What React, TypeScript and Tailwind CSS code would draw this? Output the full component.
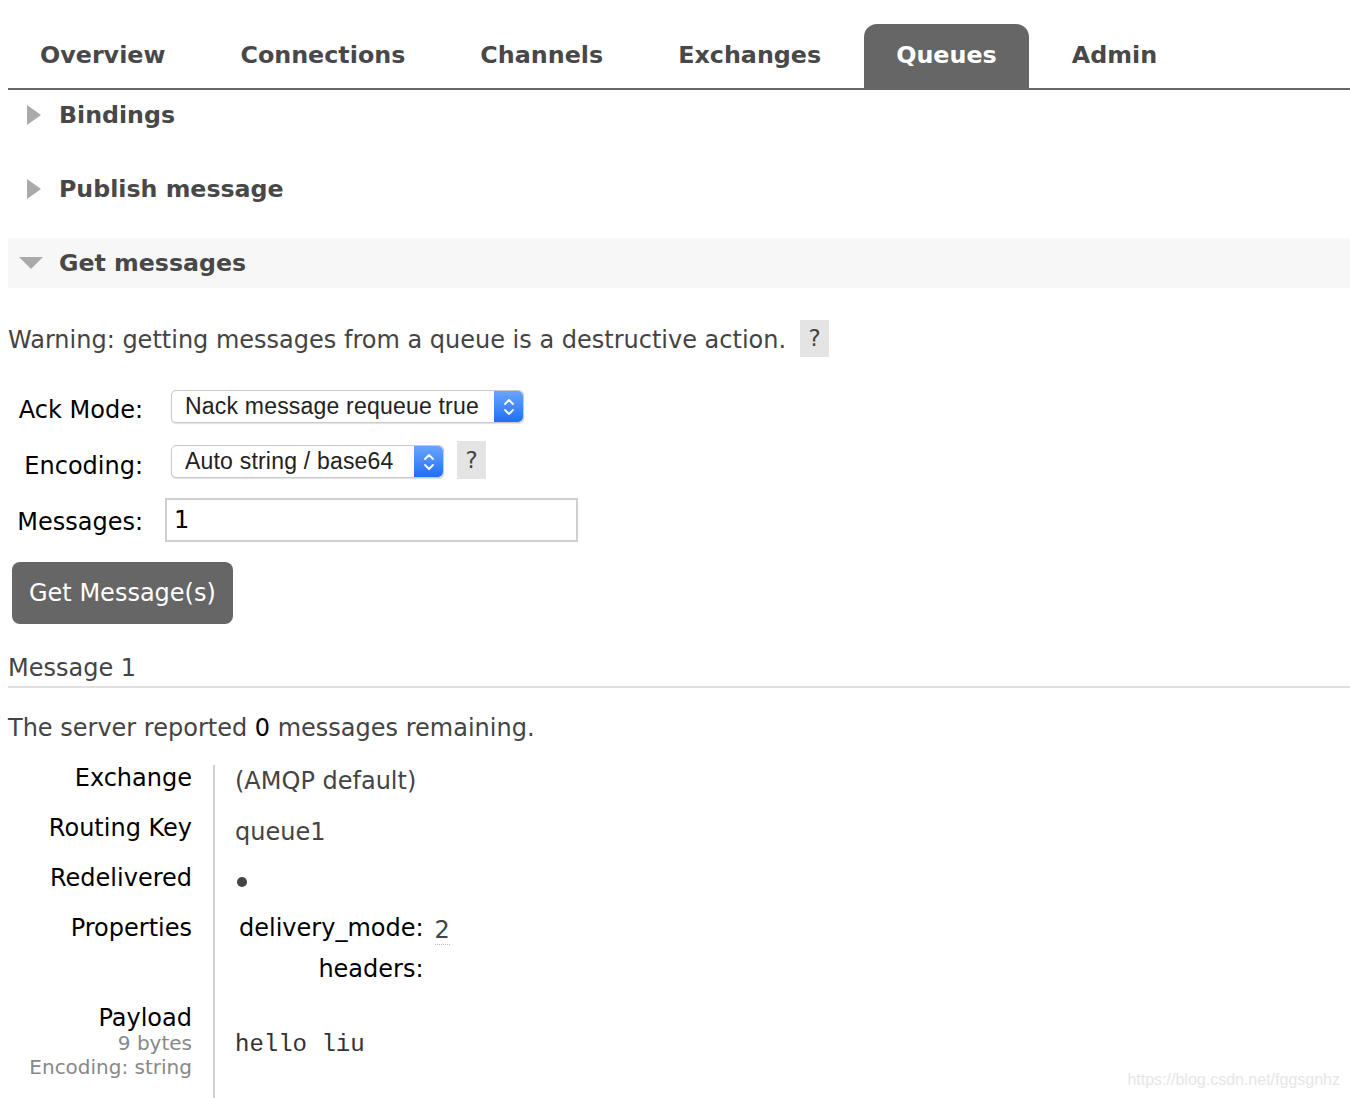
import React from "react";

const verdana = { fontFamily: '"DejaVu Sans", Verdana, sans-serif' };
const arial = { fontFamily: '"Liberation Sans", Arial, sans-serif' };
const mono = { fontFamily: '"Liberation Mono", "Courier New", monospace' };

const tabs = ["Overview", "Connections", "Channels", "Exchanges", "Queues", "Admin"];

function RightTri() {
  return (
    <svg width="14" height="20" viewBox="0 0 14 20" className="block">
      <polygon points="0,0 14,10 0,20" fill="#aaaaaa" />
    </svg>
  );
}

function DownTri() {
  return (
    <svg width="24" height="12" viewBox="0 0 24 12" className="block">
      <polygon points="0,0 24,0 12,12" fill="#aaaaaa" />
    </svg>
  );
}

function Stepper() {
  return (
    <div className="flex h-full w-[29px] items-center justify-center rounded-r-[5px] bg-gradient-to-b from-[#68a5ff] to-[#1f6ef5]">
      <svg width="12" height="22" viewBox="0 0 12 22">
        <polyline points="2,8 6,4 10,8" fill="none" stroke="#fff" strokeWidth="1.8" strokeLinecap="round" strokeLinejoin="round" />
        <polyline points="2,14 6,18 10,14" fill="none" stroke="#fff" strokeWidth="1.8" strokeLinecap="round" strokeLinejoin="round" />
      </svg>
    </div>
  );
}

function Select({ label, width }: { label: string; width: string }) {
  return (
    <div
      className={`flex h-[33px] items-stretch rounded-[5px] border border-[#c9c9c9] bg-white shadow-[0_1px_1px_rgba(0,0,0,0.12)] ${width}`}
    >
      <div
        className="flex flex-1 items-center pl-[13px] text-[23px] leading-[31px] tracking-[0.2px] text-[#222]"
        style={arial}
      >
        {label}
      </div>
      <Stepper />
    </div>
  );
}

function Help({ className = "" }: { className?: string }) {
  return (
    <div
      className={`flex h-[37px] w-[29px] shrink-0 items-center justify-center bg-[#e4e4e4] text-[23px] text-[#444] ${className}`}
      style={verdana}
    >
      ?
    </div>
  );
}

function SectionHeader({ title, open }: { title: string; open?: boolean }) {
  return (
    <div className={`flex h-[50px] items-center ${open ? "bg-[#f7f7f7]" : ""}`}>
      <div className={open ? "ml-[11px] mr-[16px]" : "ml-[19px] mr-[18px]"}>
        {open ? <DownTri /> : <RightTri />}
      </div>
      <h2 className="text-[23.7px] font-bold leading-[30px] text-[#484848]" style={verdana}>
        {title}
      </h2>
    </div>
  );
}

function DetailRow({
  label,
  children,
  height,
}: {
  label: React.ReactNode;
  children: React.ReactNode;
  height: string;
}) {
  return (
    <div className={`flex ${height}`}>
      <div className="w-[205px] shrink-0 pr-[21px] text-right text-[24px] leading-[26px] text-black" style={verdana}>
        {label}
      </div>
      <div className="flex-1 border-l-2 border-[#d0d0d0] pl-[20px]">{children}</div>
    </div>
  );
}

export default function App() {
  return (
    <div className="relative h-[1098px] overflow-hidden bg-white pl-2" style={verdana}>
      {/* top navigation */}
      <nav className="mt-[24px] flex h-[66px] items-stretch border-b-2 border-[#666]">
        {tabs.map((t) => (
          <div
            key={t}
            className={`mr-[11px] flex items-center px-[32px] text-[23.8px] font-bold ${
              t === "Queues" ? "rounded-t-[13px] bg-[#666] text-white" : "text-[#484848]"
            }`}
          >
            {t}
          </div>
        ))}
      </nav>

      {/* collapsible sections */}
      <SectionHeader title="Bindings" />
      <div className="h-[24px]" />
      <SectionHeader title="Publish message" />
      <div className="h-[24px]" />
      <SectionHeader title="Get messages" open />

      {/* get messages form */}
      <div className="mt-[32px] flex items-center">
        <p className="pt-[3px] text-[24px] leading-[34px] text-[#444]">
          Warning: getting messages from a queue is a destructive action.
        </p>
        <Help className="ml-[14px]" />
      </div>

      <div className="mt-[33px] flex items-start">
        <div className="mt-[4px] w-[135px] text-right text-[24px] leading-[33px] text-black">Ack Mode:</div>
        <div className="ml-[28px]">
          <Select label="Nack message requeue true" width="w-[353px]" />
        </div>
      </div>
      <div className="mt-[14px] flex items-start">
        <div className="mt-[9px] w-[135px] text-right text-[24px] leading-[33px] text-black">Encoding:</div>
        <div className="ml-[28px] mt-[4px]">
          <Select label="Auto string / base64" width="w-[273px]" />
        </div>
        <Help className="ml-[13px] h-[38px]" />
      </div>
      <div className="mt-[15px] flex items-start">
        <div className="mt-[8px] w-[135px] text-right text-[24px] leading-[33px] text-black">Messages:</div>
        <div className="ml-[22px] flex h-[44px] w-[413px] items-center border-2 border-[#cfcfcf] px-[7px] text-[24px] leading-[30px] text-black">
          1
        </div>
      </div>

      <button
        className="ml-[4px] mt-[20px] block h-[62px] rounded-[8px] bg-[#666] px-[17px] text-[24px] leading-[30px] text-white"
        style={verdana}
      >
        Get Message(s)
      </button>

      <div className="mt-[30px] border-b-2 border-[#e0e0e0] pb-[4px] text-[24px] leading-[28px] text-[#444]">
        Message 1
      </div>

      <p className="mt-[26px] text-[24px] leading-[28px] text-[#444]">
        The server reported <span className="text-black">0</span> messages remaining.
      </p>

      {/* message details */}
      <div className="mt-[23px]">
        <DetailRow label="Exchange" height="h-[50px]">
          <div className="pt-[3px] text-[24px] leading-[26px] text-[#444]">(AMQP default)</div>
        </DetailRow>
        <DetailRow label="Routing Key" height="h-[50px]">
          <div className="pt-[4px] text-[24px] leading-[26px] text-[#444]">queue1</div>
        </DetailRow>
        <DetailRow label="Redelivered" height="h-[50px]">
          <div className="pl-[2px] pt-[12px]">
            <div className="h-[10px] w-[10px] rounded-full bg-[#444]" />
          </div>
        </DetailRow>
        <DetailRow label="Properties" height="h-[90px]">
          <div className="grid grid-cols-[auto_auto] justify-start gap-x-[11px] gap-y-[13px] pl-[4px] text-[24px] leading-[26px]">
            <div className="text-right text-black">delivery_mode:</div>
            <div className="pt-[2px]">
              <span className="border-b border-dotted border-[#bbb] text-[#444]">2</span>
            </div>
            <div className="text-right text-black">headers:</div>
            <div />
          </div>
        </DetailRow>
        <DetailRow
          label={
            <>
              <div>Payload</div>
              <div className="text-[20px] leading-[24px] text-[#888]">9 bytes</div>
              <div className="text-[20px] leading-[24px] text-[#888]">Encoding: string</div>
            </>
          }
          height="h-[120px]"
        >
          <div className="pt-[27px] text-[24px] leading-[26px] text-[#333]" style={mono}>
            hello liu
          </div>
        </DetailRow>
      </div>

      <div className="absolute bottom-[6px] right-[10px] text-[16px] text-[#e6e6e6]" style={arial}>
        https://blog.csdn.net/fggsgnhz
      </div>
    </div>
  );
}
